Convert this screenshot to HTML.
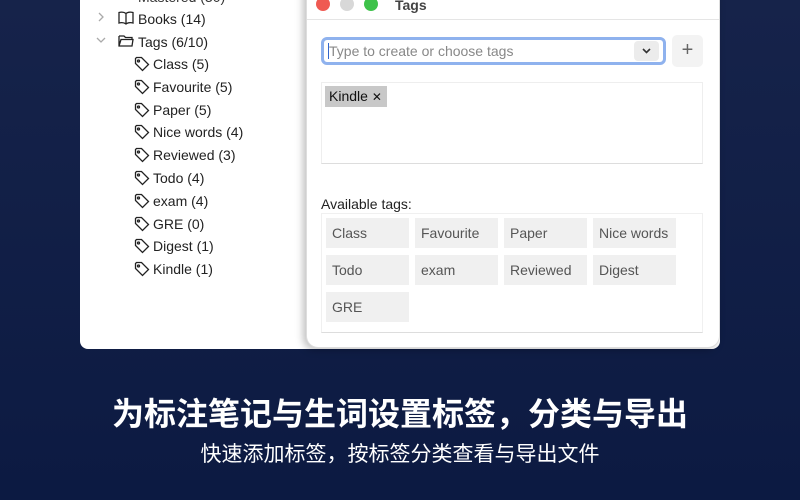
<!DOCTYPE html>
<html><head><meta charset="utf-8"><style>
*{margin:0;padding:0;box-sizing:border-box}
body{width:800px;height:500px;overflow:hidden;background:linear-gradient(#16234a,#0c1a42);font-family:"Liberation Sans","Noto Sans CJK SC",sans-serif;position:relative}
.main{position:absolute;left:80px;top:-10px;width:640px;height:359px;background:#fff;border-radius:0 0 8px 8px}
.row{position:absolute;font-size:14px;color:#222;white-space:nowrap;line-height:18px}
.row svg{position:absolute;top:1px}
.win{position:absolute;left:306px;top:-12px;width:414px;height:360px;background:#fff;border-radius:0 0 12px 12px;box-shadow:-3px 2px 8px rgba(0,0,0,.25);border:1px solid #ddd}
.tl{position:absolute;top:8px;width:14px;height:14px;border-radius:50%}
.chip{position:absolute;width:83px;height:30px;background:#f0f0f0;color:#555;font-size:14px;line-height:30px;padding-left:6px}
</style></head><body>
<div class="main"></div>
<div class="row" style="left:138px;top:-12px;color:#333">Mastered (30)</div>
<div class="row" style="left:97px;top:10px"><svg width="8" height="12" viewBox="0 0 8 12" fill="none" stroke="#aaa" stroke-width="1.3"><path d="M2 2l4 4-4 4"/></svg></div>
<div class="row" style="left:118px;top:10px"><svg width="16" height="14" viewBox="0 0 16 14" fill="none" stroke="#222" stroke-width="1.3"><path d="M8 2.5C6 1 3 1 1 1.5V12c2-.5 5-.5 7 1 2-1.5 5-1.5 7-1V1.5C13 1 10 1 8 2.5zM8 2.5V13"/></svg><span style="margin-left:20px">Books (14)</span></div>
<div class="row" style="left:95px;top:33px"><svg width="12" height="12" viewBox="0 0 12 12" fill="none" stroke="#aaa" stroke-width="1.3"><path d="M2 4l4 4 4-4"/></svg></div>
<div class="row" style="left:118px;top:33px"><svg width="16" height="14" viewBox="0 0 16 14" fill="none" stroke="#222" stroke-width="1.3"><path d="M1 2h5l1.5 1.5H14v1.5M1 2v10h13l1-6.5H3L1 12"/></svg><span style="margin-left:20px">Tags (6/10)</span></div>
<div id="tags"></div>
<div class="win">
<div class="tl" style="left:9px;background:#ef5a52"></div>
<div class="tl" style="left:33px;background:#d8d8d8"></div>
<div class="tl" style="left:57px;background:#3ec24a"></div>
<div style="position:absolute;left:88px;top:8px;font-size:14px;font-weight:bold;color:#444">Tags</div>
<div style="position:absolute;left:0;right:0;top:30px;border-top:1px solid #e5e5e5"></div>
<div style="position:absolute;left:14px;top:48px;width:345px;height:28px;border:3px solid #8fb2ee;border-radius:6px;font-size:14px;color:#888;line-height:22px;padding-left:4px"><span style="border-left:1px solid #3366cc">Type to create or choose tags</span>
<div style="position:absolute;right:4px;top:1px;width:25px;height:20px;background:#ececec;border-radius:4px"><svg width="25" height="20" viewBox="0 0 25 20" fill="none" stroke="#333" stroke-width="1.6"><path d="M9 8l3.5 3.5L16 8"/></svg></div></div>
<div style="position:absolute;left:365px;top:46px;width:31px;height:32px;background:#f3f3f3;border-radius:5px;text-align:center;line-height:31px;font-size:20px;color:#666">+</div>
<div style="position:absolute;left:14px;top:93px;width:382px;height:82px;border:1px solid #eee;border-bottom-color:#ddd"></div>
<div style="position:absolute;left:18px;top:97px;width:62px;height:21px;background:#c8c8c8;font-size:14px;line-height:21px;padding-left:4px;color:#111">Kindle <span style="font-size:12px">✕</span></div>
<div style="position:absolute;left:14px;top:207px;font-size:14px;color:#222">Available tags:</div>
<div style="position:absolute;left:14px;top:224px;width:382px;height:120px;border:1px solid #f0f0f0;border-bottom-color:#ddd"></div>
<div class="chip" style="left:19px;top:229px">Class</div>
<div class="chip" style="left:108px;top:229px">Favourite</div>
<div class="chip" style="left:197px;top:229px">Paper</div>
<div class="chip" style="left:286px;top:229px">Nice words</div>
<div class="chip" style="left:19px;top:266px">Todo</div>
<div class="chip" style="left:108px;top:266px">exam</div>
<div class="chip" style="left:197px;top:266px">Reviewed</div>
<div class="chip" style="left:286px;top:266px">Digest</div>
<div class="chip" style="left:19px;top:303px">GRE</div>
</div>
<div style="position:absolute;left:0;width:800px;top:389px;text-align:center;color:#fff;font-size:32px;font-weight:bold;letter-spacing:0;font-family:'Noto Sans CJK SC',sans-serif">为标注笔记与生词设置标签，分类与导出</div>
<div style="position:absolute;left:0;width:800px;top:438px;text-align:center;color:#fff;font-size:21px;font-family:'Noto Sans CJK SC',sans-serif">快速添加标签，按标签分类查看与导出文件</div>
<script>
var n=["Class (5)","Favourite (5)","Paper (5)","Nice words (4)","Reviewed (3)","Todo (4)","exam (4)","GRE (0)","Digest (1)","Kindle (1)"],h="";
n.forEach(function(t,i){h+='<div class="row" style="left:134px;top:'+(55+i*22.8)+'px"><svg width="16" height="16" viewBox="0 0 16 16" fill="none" stroke="#222" stroke-width="1.3"><path d="M1.5 2.5v5l7 7 6-6-7-7h-5z"/><circle cx="4.5" cy="5" r="1"/></svg><span style="margin-left:19px">'+t+'</span></div>'});
document.getElementById("tags").innerHTML=h;
</script>
</body></html>
